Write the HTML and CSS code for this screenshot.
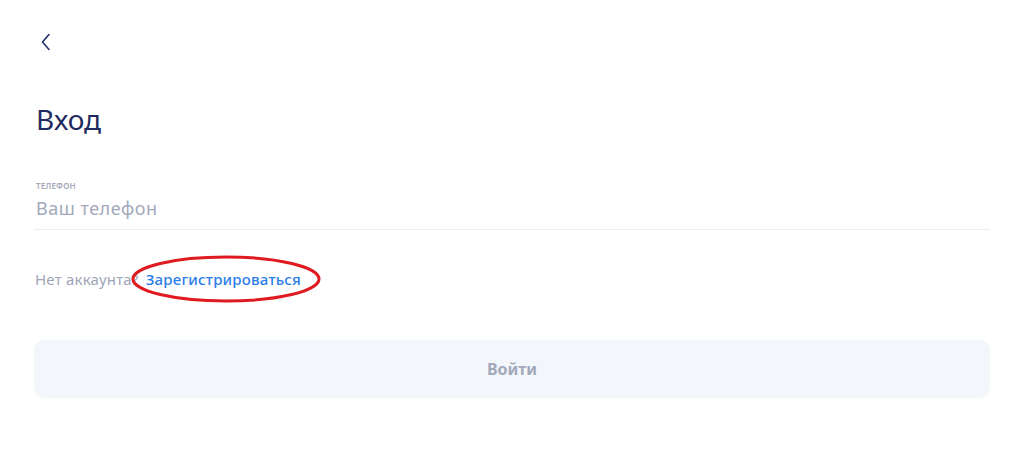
FILE: index.html
```html
<!DOCTYPE html>
<html lang="ru">
<head>
<meta charset="utf-8">
<link rel="stylesheet" href="styles.css">
</head>
<body>
<main class="page">
  <button class="back" aria-label="Назад">
    <svg width="12" height="18" viewBox="0 0 12 18"><path d="M9 1.5 L2.5 9 L9 16.5" fill="none" stroke="#23306b" stroke-width="1.6" stroke-linecap="round" stroke-linejoin="round"/></svg>
  </button>
  <h1 class="title">Вход</h1>
  <div class="field">
    <label class="label">ТЕЛЕФОН</label>
    <div class="input">Ваш телефон</div>
  </div>
  <p class="signup">Нет аккаунта? <span class="link-wrap"><a class="link">Зарегистрироваться</a><svg class="circle" width="192" height="50" viewBox="0 0 192 50"><ellipse cx="96" cy="25" rx="93" ry="22" fill="none" stroke="#df1a20" stroke-width="3"/></svg></span></p>
  <button class="submit">Войти</button>
</main>
</body>
</html>
```
FILE: styles.css
```css
* { box-sizing: border-box; }
html, body { margin: 0; background: #fff; }
body { font-family: "Noto Sans", "Open Sans", sans-serif; }
.page {
  padding: 33px 34px 0;
  display: flex;
  flex-direction: column;
}
.back {
  width: 24px;
  height: 18px;
  padding: 0 0 0 6px;
  margin: 0;
  border: 0;
  background: none;
  display: flex;
  align-items: center;
}
.title {
  margin: 48px 0 0 2px;
  font-size: 28px;
  font-weight: 400;
  line-height: 40px;
  color: #1f2a5e;
}
.field {
  margin-top: 41px;
  border-bottom: 1px solid #eceef4;
  padding-bottom: 9px;
}
.label {
  display: block;
  margin-left: 2px;
  font-size: 8px;
  font-weight: 600;
  letter-spacing: 0.2px;
  color: #a4a9b8;
  line-height: 12px;
}
.input {
  margin: 4px 0 0 2px;
  font-size: 18px;
  letter-spacing: 0.5px;
  line-height: 24px;
  color: #a2a8bb;
}
.signup {
  margin: 39px 0 0 1px;
  font-size: 15px;
  letter-spacing: 0.2px;
  line-height: 20px;
  color: #a0a6b6;
}
.link-wrap { position: relative; margin-left: 3px; }
.link { color: #2b7de9; font-weight: 500; }
.circle {
  position: absolute;
  left: -16px;
  top: -15px;
  pointer-events: none;
}
.submit {
  margin-top: 51px;
  height: 58px;
  border: 0;
  border-radius: 10px;
  background: #f3f6fa;
  font-family: "Noto Sans", "Open Sans", sans-serif;
  font-size: 16px;
  font-weight: 700;
  color: #a1a9bb;
}
```
